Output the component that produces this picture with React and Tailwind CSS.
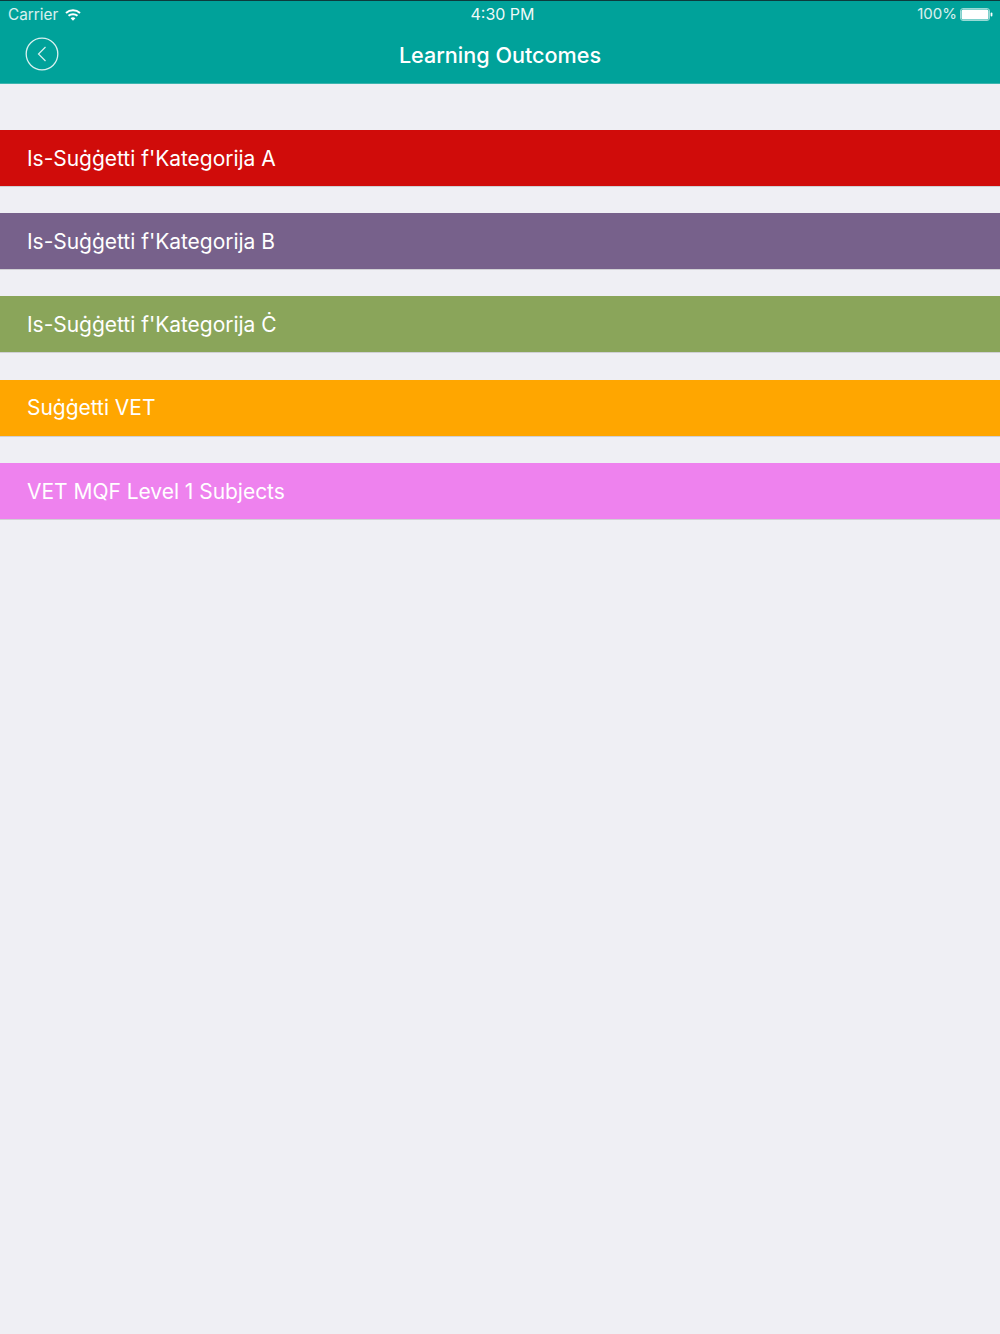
const ROWS = [
  { label: "Is-Suġġetti f'Kategorija A", bg: 'bg-[#d00c0a]' },
  { label: "Is-Suġġetti f'Kategorija B", bg: 'bg-[#77618b]' },
  { label: "Is-Suġġetti f'Kategorija Ċ", bg: 'bg-[#8aa55a]' },
  { label: 'Suġġetti VET', bg: 'bg-[#ffa600]' },
  { label: 'VET MQF Level 1 Subjects', bg: 'bg-[#ee82ee]' },
];

function WifiIcon() {
  return (
    <svg width="16" height="12" viewBox="0 0 16 12" fill="none" stroke="white" strokeWidth="2">
      <path d="M1 4 C5 0.4 11 0.4 15 4" />
      <path d="M3.5 6.8 C6 4.7 10 4.7 12.5 6.8" />
      <path d="M8 11.8 L5.6 9.2 C7 8 9 8 10.4 9.2 Z" fill="white" stroke="none" />
    </svg>
  );
}

function BatteryIcon() {
  return (
    <svg width="33" height="13" viewBox="0 0 33 13">
      <rect x="0.5" y="0.5" width="29" height="12" rx="2.5" fill="none" stroke="white" strokeOpacity="0.6" />
      <rect x="1.5" y="1.5" width="27" height="10" rx="1.5" fill="white" />
      <rect x="30.6" y="4.5" width="1.8" height="4" rx="0.9" fill="white" />
    </svg>
  );
}

function StatusBar() {
  return (
    <div className="grid grid-cols-3 items-center h-[28px] pl-[8px] pr-[7px] text-[15px] text-white/85">
      <div className="flex items-center gap-[7px]">
        <span className="text-[15.3px]">Carrier</span>
        <WifiIcon />
      </div>
      <div className="text-center pl-[4px] pb-[2px] text-[16px] text-white/95">4:30 PM</div>
      <div className="flex items-center justify-end gap-[3px] pb-[1px]">
        <span>100%</span>
        <BatteryIcon />
      </div>
    </div>
  );
}

function BackIcon() {
  return (
    <svg width="34" height="34" viewBox="0 0 34 34" fill="none" stroke="white" strokeOpacity="0.85">
      <circle cx="17" cy="17" r="15.8" strokeWidth="1.3" />
      <path d="M20.5 10 L13.5 17 L20.5 24" strokeWidth="1.2" />
    </svg>
  );
}

export default function App() {
  return (
    <div className="min-h-screen bg-[#efeff4] font-['Inter','Roboto',sans-serif]">
      <header className="bg-[#00a29a] border-t border-[#0d3b3d] border-b border-b-[#3cb5ae] h-[84px]">
        <StatusBar />
        <div className="relative flex items-center justify-center h-[52px] text-[21.6px] font-medium text-white">
          <span className="absolute left-[25px] top-[8px] flex">
            <BackIcon />
          </span>
          Learning Outcomes
        </div>
      </header>
      <main className="flex flex-col gap-[26.2px] pt-[46px]">
        {ROWS.map((row) => (
          <div
            key={row.label}
            className={`${row.bg} h-[57px] flex items-center pl-[27px] pt-[1px] border-b border-[#d0d0d4] text-[21px] tracking-[-0.03px] text-white`}
          >
            {row.label}
          </div>
        ))}
      </main>
    </div>
  );
}
